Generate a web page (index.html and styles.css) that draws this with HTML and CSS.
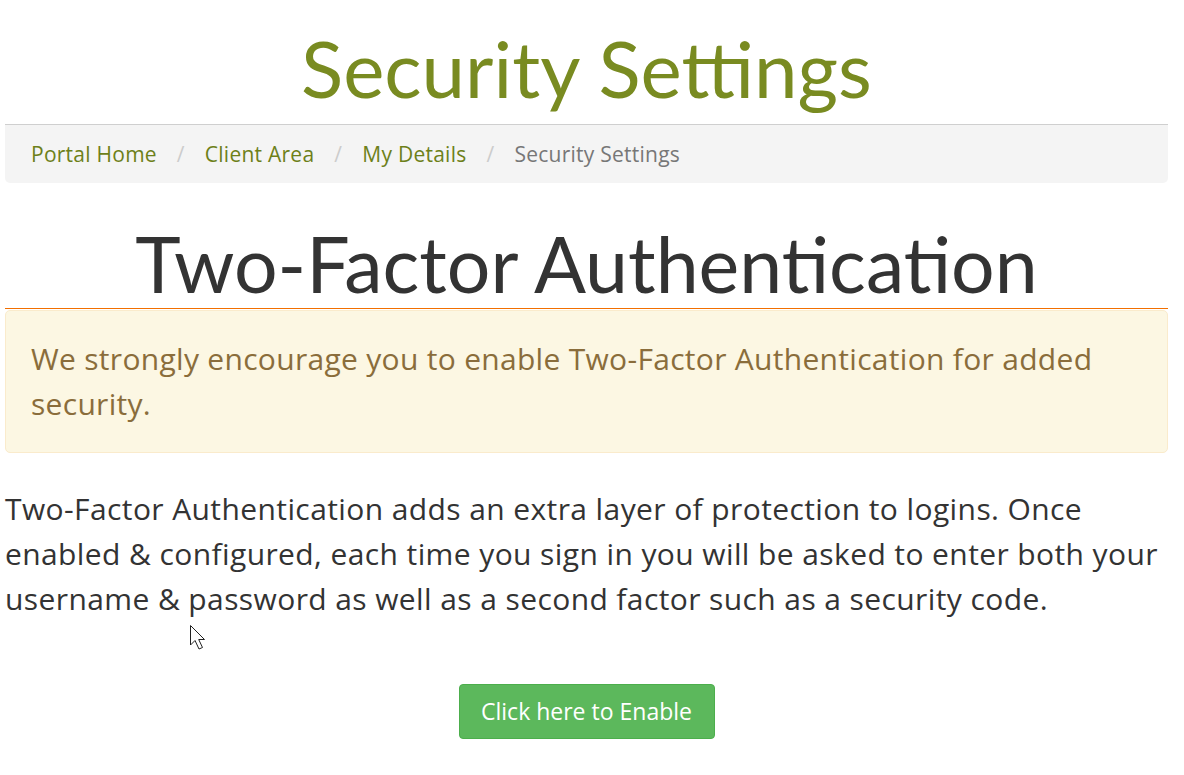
FILE: index.html
```html
<!DOCTYPE html>
<html lang="en">
<head>
<meta charset="utf-8">
<title>Security Settings</title>
<link rel="stylesheet" href="styles.css">
</head>
<body>
<div class="page">
  <h1 class="page-title">Security Settings</h1>
  <nav class="breadcrumb">
    <a href="#">Portal Home</a><span class="sep">/</span>
    <a href="#">Client Area</a><span class="sep">/</span>
    <a href="#">My Details</a><span class="sep">/</span>
    <span class="active">Security Settings</span>
  </nav>
  <h2 class="section-title">Two-Factor Authentication</h2>
  <div class="alert">We strongly encourage you to enable Two-Factor Authentication for added security.</div>
  <p class="intro">Two-Factor Authentication adds an extra layer of protection to logins. Once enabled &amp; configured, each time you sign in you will be asked to enter both your username &amp; password as well as a second factor such as a security code.</p>
  <div class="actions">
    <a class="btn" href="#">Click here to Enable</a>
  </div>
</div>
<svg class="cursor" width="19" height="28" viewBox="0 0 19 28"><path d="M0.5 0.5 L0.5 20 L5 15.5 L9 24 L12.5 22.5 L8.7 14.5 L14.5 14.5 Z" fill="#fff" stroke="#222" stroke-width="1" stroke-linejoin="miter"/></svg>
</body>
</html>
```
FILE: styles.css
```css
html, body { margin: 0; padding: 0; background: #fff; }
body { font-family: "Open Sans", "Lato", sans-serif; color: #333; position: relative; }
.page { width: 1163px; margin-left: 5px; }
.page-title {
  margin: 0; padding-top: 20px; height: 104px;
  font-family: "Lato", sans-serif;
  text-align: center; font-weight: 400; font-size: 78px; line-height: 96px;
  color: #798b21;
}
.breadcrumb {
  box-sizing: border-box; height: 59px;
  border-top: 1px solid #cfcfcf; background: #f4f4f4;
  border-radius: 0 0 5px 5px;
  padding: 0 26px; display: flex; align-items: center;
  font-size: 21px; letter-spacing: 0.25px;
}
.breadcrumb a { color: #6d8019; text-decoration: none; }
.breadcrumb .sep { color: #ccc; padding: 0 20px; }
.breadcrumb .active { color: #777; }
.section-title {
  margin: 0; height: 126px; box-sizing: border-box;
  border-bottom: 1px solid #f26f00;
  font-family: "Lato", sans-serif;
  text-align: center; font-weight: 400; font-size: 77px; line-height: 80px;
  padding-top: 40px; color: #333;
}
.alert {
  margin-top: 1px; box-sizing: border-box; height: 143px;
  background: #fcf7e3; border: 1px solid #faebcc; border-radius: 5px;
  padding: 25px 25px; font-size: 30px; line-height: 45px; color: #8a6d3b;
  letter-spacing: 0.3px;
}
.intro { margin: 33px 0 0; font-size: 30px; line-height: 45px; color: #333; letter-spacing: 0.4px; }
.actions { text-align: center; margin-top: 63px; }
.btn {
  display: inline-block; box-sizing: border-box; width: 256px; height: 55px;
  background: #5cb85c; border: 1px solid #4cae4c; border-radius: 4px;
  color: #fff; text-decoration: none; font-family: "Open Sans", sans-serif;
  font-size: 23px; line-height: 53px;
}
.cursor { position: absolute; left: 190px; top: 625px; }
```
